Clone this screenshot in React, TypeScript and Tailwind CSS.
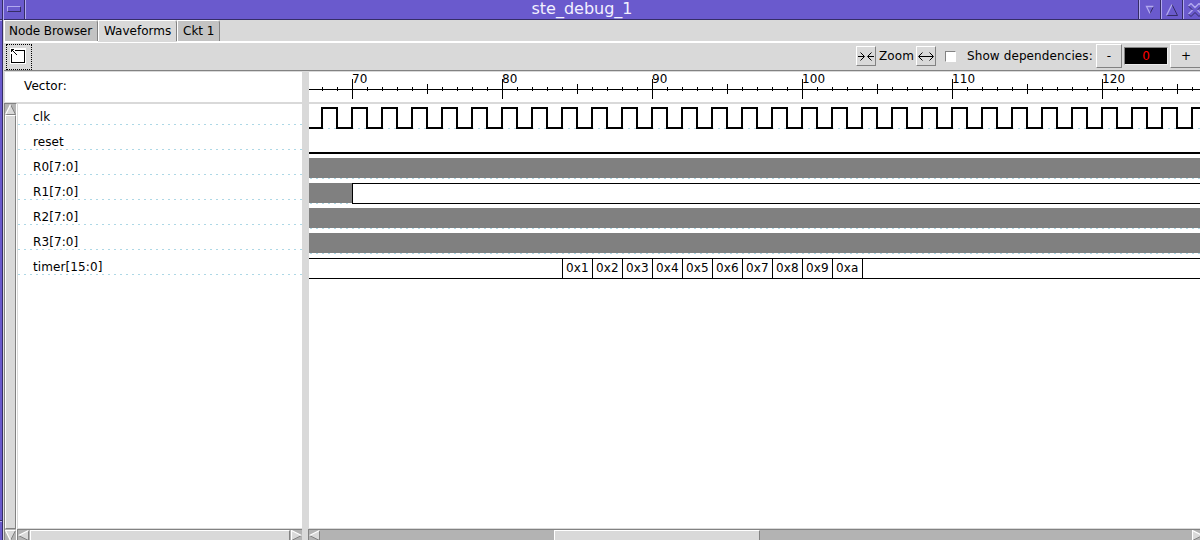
import type { ReactNode } from "react";

const signals = ["clk", "reset", "R0[7:0]", "R1[7:0]", "R2[7:0]", "R3[7:0]", "timer[15:0]"];
const timerValues = ["0x1", "0x2", "0x3", "0x4", "0x5", "0x6", "0x7", "0x8", "0x9", "0xa"];

// Horizontal scale: 15px per time unit, time 70 sits 43px from the left edge.
const xOf = (t: number) => 43 + (t - 70) * 15;
const ticks = Array.from({ length: 60 }, (_, i) => 68 + i);

function Tab({ children, active = false, w }: { children: ReactNode; active?: boolean; w: string }) {
  return (
    <div className={`${w} shrink-0 whitespace-nowrap border-t border-l border-t-white border-l-white border-r border-r-[#828282] rounded-tr-[3px] pt-[2px] leading-4 ${active ? "h-[22px] bg-[#d9d9d9]" : "h-[21px] bg-[#c3c3c3]"}`}>
      {children}
    </div>
  );
}

function Arrow({ dir }: { dir: "up" | "down" | "left" | "right" }) {
  const shapes = {
    up: { fill: "0.5,10.5 5.5,0.5 10.5,10.5", light: "M.5 10.5L5.5.5", dark: "M5.5.5L10.5 10.5H.5" },
    down: { fill: "0.5,0.5 10.5,0.5 5.5,10.5", light: "M5.5 10.5L.5.5H10.5", dark: "M10.5.5L5.5 10.5" },
    left: { fill: "0.5,5.5 10.5,0.5 10.5,10.5", light: "M.5 5.5L10.5.5", dark: "M10.5.5V10.5L.5 5.5" },
    right: { fill: "0.5,0.5 10.5,5.5 0.5,10.5", light: "M.5 10.5V.5L10.5 5.5", dark: "M10.5 5.5L.5 10.5" },
  };
  const s = shapes[dir];
  return (
    <svg className="shrink-0" width="11" height="11" viewBox="0 0 11 11" fill="none">
      <polygon points={s.fill} fill="#d9d9d9" />
      <path d={s.dark} stroke="#828282" />
      <path d={s.light} stroke="#fff" strokeWidth="1.2" />
    </svg>
  );
}

function WindowButton({ children }: { children: ReactNode }) {
  return (
    <div className="flex h-[19px] w-[22px] shrink-0 items-center justify-center border-l border-r border-l-[#b2a9ef] border-r-[#352d66]">
      {children}
    </div>
  );
}

function TitleBar() {
  return (
    <div className="flex h-5 shrink-0 border-b border-b-[#352d66] bg-[#6a5acd]">
      <div className="w-[21px] shrink-0 border-r border-r-[#352d66] pt-[6px] pl-[3px]">
        <div className="h-[6px] w-[14px] border border-t-[#b2a9ef] border-l-[#b2a9ef] border-r-[#352d66] border-b-[#352d66]" />
      </div>
      <div className="w-px shrink-0 bg-[#b2a9ef]" />
      <div className="w-[1112px] shrink-0 text-center text-base leading-[18px] text-[#f2f0ff]">ste_debug_1</div>
      <div className="w-px shrink-0 bg-[#352d66]" />
      <WindowButton>
        <svg width="10" height="10" fill="none" viewBox="0 0 10 10">
          <path d="M8.5 1.5L5 8.5" stroke="#352d66" />
          <path d="M5 8.5L1.5 1.5H8.5" stroke="#b2a9ef" strokeWidth="1.3" />
        </svg>
      </WindowButton>
      <WindowButton>
        <svg width="12" height="12" fill="none" viewBox="0 0 12 12">
          <path d="M6 .5L11.5 11.5H.5" stroke="#352d66" />
          <path d="M.5 11.5L6 .5" stroke="#b2a9ef" strokeWidth="1.3" />
        </svg>
      </WindowButton>
      <WindowButton>
        <svg className="ml-[2px] shrink-0" width="14" height="14" fill="none" viewBox="0 0 14 14">
          <path d="M13.5 3L9.5 7L13.5 11L11 13.5L7 9.5L3 13.5L.5 11M.5 3L4.5 7" stroke="#352d66" />
          <path d="M.5 11L4.5 7M.5 3L3 .5L7 4.5L11 .5L13.5 3M9.5 7L13.5 11" stroke="#b2a9ef" strokeWidth="1.4" />
        </svg>
      </WindowButton>
    </div>
  );
}

function Toolbar() {
  return (
    <div className="flex h-[28px] shrink-0 items-start border-b border-b-[#828282] pl-[2px] tracking-[0.1px]">
      <div className="mt-[1px] h-[26px] w-[26px] shrink-0 border border-dotted border-black pt-[3px] pl-[3px]">
        <svg className="block" width="16" height="16" viewBox="0 0 16 16" fill="none" shapeRendering="crispEdges">
          <rect width="16" height="16" fill="#fff" />
          <path d="M5 2.5H14.5V14.5H1.5V6M1.5 4V1M1 1.5H4" stroke="#000" />
          <path d="M1 1h2v1h-2zM2 2h1v1h-1zM3 3h1v1h-1zM4 4h1v1h-1zM5 5h1v1h-1zM6 6h1v1h-1z" fill="#000" />
        </svg>
      </div>
      <div className="ml-[824px] mt-[3px] flex h-5 w-5 shrink-0 items-center justify-center border border-t-white border-l-white border-r-[#828282] border-b-[#828282]">
        <svg width="16" height="9" viewBox="0 0 16 9" fill="none" stroke="#000">
          <path d="M0 4.5H6M16 4.5H10M2.5 .5L6.5 4.5L2.5 8.5M13.5 .5L9.5 4.5L13.5 8.5" />
        </svg>
      </div>
      <div className="mt-[5px] w-[40px] shrink-0 pl-[3px] leading-4">Zoom</div>
      <div className="mt-[3px] flex h-5 w-5 shrink-0 items-center justify-center border border-t-white border-l-white border-r-[#828282] border-b-[#828282]">
        <svg width="16" height="9" viewBox="0 0 16 9" fill="none" stroke="#000">
          <path d="M1 4.5H15M4.5 .5L.5 4.5L4.5 8.5M11.5 .5L15.5 4.5L11.5 8.5" />
        </svg>
      </div>
      <div className="mt-2 ml-[9px] h-[11px] w-[11px] shrink-0 border border-t-[#828282] border-l-[#828282] border-r-white border-b-white bg-white" />
      <div className="mt-[5px] ml-[11px] w-[129px] shrink-0 whitespace-nowrap leading-4">Show dependencies:</div>
      <div className="mt-[1px] h-6 w-[26px] shrink-0 border border-t-white border-l-white border-r-[#828282] border-b-[#828282] text-center leading-[22px]">-</div>
      <div className="mt-[4px] ml-[2px] h-[18px] w-[44px] shrink-0 border border-t-[#828282] border-l-[#828282] border-r-[#ececec] border-b-[#ececec] bg-black text-center leading-[17px] text-[#ff0000]">0</div>
      <div className="mt-[1px] ml-[2px] h-6 w-[32px] shrink-0 border-t border-l border-b border-t-white border-l-white border-b-[#828282] pl-[10px] leading-[22px]">+</div>
    </div>
  );
}

function Waves() {
  // The clock is high from each even time unit to the next odd one.
  const clock = ticks
    .map((t) => (t % 2 === 0 ? `L${xOf(t)} 24L${xOf(t)} 4` : `L${xOf(t)} 4L${xOf(t)} 24`))
    .join("");
  return (
    <svg width="891" height="424" className="block" fill="none" shapeRendering="crispEdges">
      {[24, 49, 74, 99, 124, 149, 174].map((y) => (
        <path key={y} d={`M1 ${y + 0.5}H891`} stroke="#add8e6" strokeDasharray="2 4" />
      ))}
      <path d={`M-20 24${clock}`} stroke="#000" strokeWidth="2" />
      <path d="M0 49H891" stroke="#000" strokeWidth="2" />
      <path d="M0 54H891V74H0ZM0 79H43V99H0ZM0 104H891V124H0ZM0 129H891V149H0Z" fill="#808080" />
      <path d="M892 79.5H43.5V99.5H892" fill="#fff" stroke="#000" />
      <path d="M-1 154.5H892V174.5H-1Z" fill="#fff" stroke="#000" />
      {Array.from({ length: 11 }, (_, i) => (
        <path key={i} d={`M${253.5 + i * 30} 154V175`} stroke="#000" />
      ))}
      {timerValues.map((v, i) => (
        <text key={v} x={257 + i * 30} y="168" fill="#000" fontSize="12">{v}</text>
      ))}
    </svg>
  );
}

function Ruler() {
  return (
    <svg width="891" height="30" className="block" fill="none" shapeRendering="crispEdges">
      <path d="M0 17.5H891" stroke="#000" />
      {ticks.map((t) => {
        const [a, b] = t % 10 === 0 ? [7, 27] : t % 5 === 0 ? [12, 22] : [15, 19];
        return <path key={t} d={`M${xOf(t) + 0.5} ${a}V${b}`} stroke="#000" />;
      })}
      {[70, 80, 90, 100, 110, 120].map((t) => (
        <text key={t} x={xOf(t)} y="11" fill="#000" fontSize="12">{t}</text>
      ))}
    </svg>
  );
}

export default function App() {
  return (
    <div className="flex h-[540px] w-[1200px] overflow-hidden bg-[#d9d9d9] font-['DejaVu_Sans',sans-serif] text-xs text-black">
      <div className="flex w-[3px] shrink-0 flex-col border-r border-r-[#352d66] bg-[#6a5acd]">
        <div className="h-5 border-b border-b-[#352d66]" />
        <div className="h-[501px] border-t border-t-[#b2a9ef] border-b border-b-[#352d66]" />
        <div className="flex-1 border-t border-t-[#b2a9ef]" />
      </div>
      <div className="flex w-px shrink-0 flex-col">
        <div className="h-5 bg-[#b2a9ef]" />
      </div>
      <div className="flex w-[1196px] shrink-0 flex-col">
        <TitleBar />
        <div className="flex h-[21px] shrink-0 items-start">
          <Tab w="w-[94px] pl-[4px] tracking-[-0.06px]">Node Browser</Tab>
          <Tab active w="w-[79px] pl-[5px]">Waveforms</Tab>
          <Tab w="w-[43px] pl-[5px]">Ckt 1</Tab>
        </div>
        <div className="flex h-[2px] shrink-0 bg-white">
          <div className="ml-[94px] h-px w-[79px] bg-[#d9d9d9]" />
        </div>
        <Toolbar />
        <div className="mt-px flex h-[30px] shrink-0 bg-white tracking-[0.1px]">
          <div className="w-px bg-[#d9d9d9]" />
          <div className="w-[297px] pt-[6px] pl-[19px] leading-4">Vector:</div>
          <div className="w-[7px] bg-[#d9d9d9]" />
          <Ruler />
        </div>
        <div className="flex h-[426px] shrink-0 tracking-[0.1px]">
          <div className="mt-px -mb-px flex w-[13px] shrink-0 flex-col items-center border-t border-t-[#828282] border-l border-l-[#828282] border-r border-r-white bg-[#b3b3b3]">
            <Arrow dir="up" />
            <div className="w-[11px] flex-1 border border-t-white border-l-white border-r-[#828282] border-b-[#828282] bg-[#d9d9d9]" />
          </div>
          <div className="w-px bg-[#d9d9d9]" />
          <div className="mt-[2px] w-[284px] shrink-0 bg-white">
            {signals.map((s) => (
              <div key={s} className="h-[25px]">
                <div className="h-5 pt-[5px] pl-[15px] leading-4">{s}</div>
                <svg width="284" height="1" className="block">
                  <path d="M0 .5H284" stroke="#add8e6" strokeDasharray="2 4" />
                </svg>
              </div>
            ))}
          </div>
          <div className="w-[7px] shrink-0 bg-[#d9d9d9]" />
          <div className="mt-[2px] w-[891px] shrink-0 bg-white"><Waves /></div>
        </div>
        <div className="flex h-[12px] shrink-0 pt-px">
          <div className="flex w-[13px] shrink-0 items-start justify-center border-l border-l-[#828282] border-r border-r-white bg-[#b3b3b3] pt-px">
            <Arrow dir="down" />
          </div>
          <div className="flex w-[285px] shrink-0 border-t border-l border-t-[#828282] border-l-[#828282] bg-[#b3b3b3]">
            <Arrow dir="left" />
            <div className="ml-px mr-px flex-1 border-t border-l border-r border-t-white border-l-white border-r-[#828282] bg-[#d9d9d9]" />
            <Arrow dir="right" />
          </div>
          <div className="w-[6px] shrink-0" />
          <div className="flex w-[892px] shrink-0 overflow-hidden border-t border-l border-t-[#828282] border-l-[#828282] bg-[#b3b3b3]">
            <Arrow dir="left" />
            <div className="ml-[234px] w-[206px] shrink-0 border-t border-l border-r border-t-white border-l-white border-r-[#828282] bg-[#d9d9d9]" />
            <div className="ml-[432px] flex shrink-0"><Arrow dir="right" /></div>
          </div>
        </div>
      </div>
    </div>
  );
}
